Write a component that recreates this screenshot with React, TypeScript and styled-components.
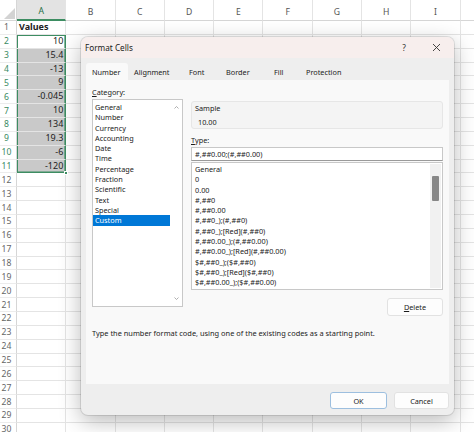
import React from "react";
import styled, { createGlobalStyle } from "styled-components";

const Global = createGlobalStyle`
  *, *::before, *::after { box-sizing: border-box; }
  html, body { margin: 0; padding: 0; background: #fff; }
  body { font-family: "Noto Sans", "Open Sans", sans-serif; }
`;

const Stage = styled.div`
  position: relative;
  width: 474px;
  height: 432px;
  overflow: hidden;
  background: #fff;
`;

/* ---------- Spreadsheet ---------- */

const Sheet = styled.div`
  display: grid;
  grid-template-columns: 17px repeat(10, 49.3px);
  grid-template-rows: 21px repeat(30, 13.87px);
  font-family: "Noto Sans", sans-serif;
  color: #222;
`;

const Corner = styled.div`
  position: relative;
  background: #fff;
  border-right: 1px solid #d6d6d6;
  border-bottom: 1px solid #d6d6d6;
`;

const CornerTriangle = styled.svg`
  position: absolute;
  right: 1px;
  bottom: 1px;
`;

const ColHeader = styled.div<{ $on?: boolean }>`
  display: flex;
  align-items: flex-end;
  justify-content: center;
  padding-bottom: 2px;
  font-size: 8.6px;
  color: ${(p) => (p.$on ? "#1f6f45" : "#555")};
  background: ${(p) => (p.$on ? "#e3e3e3" : "#fff")};
  border-right: 1px solid #e4e4e4;
  border-bottom: ${(p) => (p.$on ? "2px solid #3d8d62" : "1px solid #d6d6d6")};
`;

const RowHeader = styled.div<{ $on?: boolean }>`
  display: flex;
  align-items: center;
  justify-content: center;
  padding-right: 3px;
  font-size: 8.6px;
  color: ${(p) => (p.$on ? "#3a8a62" : "#666")};
  background: #fff;
  border-right: 1px solid #d6d6d6;
  border-bottom: 1px solid #ececec;
`;

const Cell = styled.div<{
  $range?: boolean;
  $active?: boolean;
  $top?: boolean;
  $bottom?: boolean;
  $bold?: boolean;
  $right?: boolean;
}>`
  position: relative;
  padding: 0 2px;
  font-size: 9px;
  line-height: 12.87px;
  white-space: nowrap;
  overflow: visible;
  text-align: ${(p) => (p.$right ? "right" : "left")};
  font-weight: ${(p) => (p.$bold ? 700 : 400)};
  background: ${(p) => (p.$range && !p.$active ? "#c9c9c9" : "#fff")};
  border-right: 1px solid ${(p) => (p.$range ? "#3d8d62" : "#e4e4e4")};
  border-bottom: 1px solid ${(p) => (p.$range && p.$bottom ? "#3d8d62" : "#e4e4e4")};
  box-shadow: ${(p) =>
    p.$range
      ? [
          "inset 1px 0 0 #3d8d62",
          "inset -0.6px 0 0 #3d8d62",
          p.$top ? "inset 0 1px 0 #3d8d62" : "",
          p.$bottom ? "inset 0 -0.6px 0 #3d8d62" : "",
        ]
          .filter(Boolean)
          .join(", ")
      : "none"};
`;

const FillHandle = styled.span`
  position: absolute;
  right: -3px;
  bottom: -3px;
  width: 4px;
  height: 4px;
  background: #3d8d62;
  border: 1px solid #fff;
  z-index: 2;
`;

/* ---------- Dialog ---------- */

const Dialog = styled.div`
  position: absolute;
  left: 81px;
  top: 37px;
  width: 373px;
  height: 378px;
  display: flex;
  flex-direction: column;
  background: #eeeeee;
  border-radius: 7px;
  overflow: hidden;
  box-shadow: 0 6px 22px rgba(0, 0, 0, 0.28), 0 0 0 1px rgba(0, 0, 0, 0.1);
  font-family: "Noto Sans", "Open Sans", sans-serif;
  color: #1b1b1b;
`;

const TitleBar = styled.div`
  height: 21px;
  flex: none;
  display: flex;
  align-items: center;
  padding: 0 2px 0 4px;
  background: #f7eeed;
  font-size: 8.2px;
`;

const Title = styled.span`
  flex: 1;
`;

const TitleButton = styled.div`
  width: 32px;
  height: 21px;
  display: flex;
  align-items: center;
  justify-content: center;
  font-size: 8.4px;
  color: #333;
`;

const TabStrip = styled.div`
  height: 22px;
  flex: none;
  display: flex;
  align-items: flex-end;
  padding-left: 5px;
`;

const Tab = styled.div<{ $w: number; $on?: boolean }>`
  width: ${(p) => p.$w}px;
  height: 17px;
  display: flex;
  align-items: center;
  padding-left: 6px;
  font-size: 7.3px;
  color: #1b1b1b;
  background: ${(p) => (p.$on ? "#f9f9f9" : "transparent")};
  border-radius: 3px 3px 0 0;
`;

const Panel = styled.div`
  height: 304px;
  flex: none;
  margin: 0 5px 0 5px;
  padding: 7px 5px 0 6px;
  background: #f9f9f9;
  font-size: 7.3px;
`;

const TopArea = styled.div`
  display: flex;
  gap: 8px;
`;

const LeftCol = styled.div`
  width: 91px;
  display: flex;
  flex-direction: column;
`;

const RightCol = styled.div`
  width: 252px;
  display: flex;
  flex-direction: column;
  padding-top: 14px;
`;

const Label = styled.div`
  height: 10px;
  line-height: 10px;
`;

const ListBox = styled.div<{ $h: number }>`
  height: ${(p) => p.$h}px;
  background: #fff;
  border: 1px solid #c8c8c8;
  display: flex;
  margin-top: 2px;
`;

const Items = styled.div<{ $pt: number; $pl: number }>`
  flex: 1;
  padding-top: ${(p) => p.$pt}px;
  overflow: hidden;
  & > div {
    padding-left: ${(p) => p.$pl}px;
  }
`;

const Item = styled.div<{ $sel?: boolean }>`
  height: 10.3px;
  line-height: 10.3px;
  white-space: nowrap;
  color: ${(p) => (p.$sel ? "#fff" : "#1b1b1b")};
  background: ${(p) => (p.$sel ? "#0078d7" : "transparent")};
`;

const ArrowTrack = styled.div`
  width: 12px;
  display: flex;
  flex-direction: column;
  justify-content: space-between;
  align-items: center;
  padding: 6px 0;
`;

const ScrollTrack = styled.div`
  width: 11px;
  margin: 1px 1px 1px 0;
  background: #f1f1f1;
  padding: 12px 1px 0 1.5px;
`;

const Thumb = styled.div`
  width: 7.5px;
  height: 25px;
  background: #878787;
  border-radius: 1px;
`;

const SampleGroup = styled.div`
  height: 28px;
  border: 1px solid #e6e6e6;
  border-radius: 3px;
  background: #f4f4f4;
  padding: 1px 0 0 3px;
`;

const SampleLabel = styled.div`
  line-height: 10px;
`;

const SampleValue = styled.div`
  line-height: 10px;
  margin-top: 4px;
  padding-left: 3px;
`;

const TypeLabel = styled(Label)`
  margin-top: 6px;
`;

const TypeInput = styled.div`
  height: 14px;
  margin-top: 2px;
  background: #fff;
  border: 1px solid #c8c8c8;
  border-bottom-color: #9a9a9a;
  padding-left: 3px;
  line-height: 12px;
`;

const TypeList = styled(ListBox)`
  margin-top: 1px;
`;

const Button = styled.div<{ $w: number; $default?: boolean }>`
  width: ${(p) => p.$w}px;
  height: 17px;
  display: flex;
  align-items: center;
  justify-content: center;
  font-size: 7.3px;
  color: #1b1b1b;
  background: #fdfdfd;
  border: 1px solid ${(p) => (p.$default ? "#9dbfdf" : "#e2e2e2")};
  border-radius: 3px;
`;

const DeleteButton = styled(Button)`
  align-self: flex-end;
  height: 18px;
  margin-top: 8px;
`;

const Description = styled.div`
  margin-top: 12px;
  line-height: 10px;
  font-size: 7.42px;
  white-space: nowrap;
`;

const Footer = styled.div`
  flex: 1;
  display: flex;
  justify-content: flex-end;
  gap: 7px;
  padding: 8px 5px 0 0;
`;

/* ---------- Data ---------- */

const COLS = ["A", "B", "C", "D", "E", "F", "G", "H", "I", ""];
const VALUES = ["10", "15.4", "-13", "9", "-0.045", "10", "134", "19.3", "-6", "-120"];

const CATEGORIES = [
  "General",
  "Number",
  "Currency",
  "Accounting",
  "Date",
  "Time",
  "Percentage",
  "Fraction",
  "Scientific",
  "Text",
  "Special",
  "Custom",
];

const TYPES = [
  "General",
  "0",
  "0.00",
  "#,##0",
  "#,##0.00",
  "#,##0_);(#,##0)",
  "#,##0_);[Red](#,##0)",
  "#,##0.00_);(#,##0.00)",
  "#,##0.00_);[Red](#,##0.00)",
  "$#,##0_);($#,##0)",
  "$#,##0_);[Red]($#,##0)",
  "$#,##0.00_);($#,##0.00)",
];

const TABS: [string, number][] = [
  ["Number", 42],
  ["Alignment", 55],
  ["Font", 37],
  ["Border", 48],
  ["Fill", 32],
  ["Protection", 48],
];

const Chevron = ({ up }: { up?: boolean }) => (
  <svg width="5" height="3" viewBox="0 0 5 3">
    <path
      d={up ? "M0.5 2.5 L2.5 0.5 L4.5 2.5" : "M0.5 0.5 L2.5 2.5 L4.5 0.5"}
      fill="none"
      stroke="#9a9a9a"
      strokeWidth="0.8"
    />
  </svg>
);

function SheetView() {
  const rows = [];
  for (let r = 1; r <= 30; r++) {
    const inRange = r >= 2 && r <= 11;
    rows.push(
      <RowHeader key={`rh${r}`} $on={inRange}>
        {r}
      </RowHeader>
    );
    COLS.forEach((c, ci) => {
      if (ci === 0) {
        const text = r === 1 ? "Values" : inRange ? VALUES[r - 2] : "";
        rows.push(
          <Cell
            key={`c${ci}-${r}`}
            $range={inRange}
            $active={r === 2}
            $top={r === 2}
            $bottom={r === 11}
            $bold={r === 1}
            $right={r !== 1}
          >
            {text}
            {r === 11 && <FillHandle />}
          </Cell>
        );
      } else {
        rows.push(<Cell key={`c${ci}-${r}`} />);
      }
    });
  }
  return (
    <Sheet>
      <Corner>
        <CornerTriangle width="11" height="11" viewBox="0 0 11 11">
          <polygon points="11,0 11,11 0,11" fill="#d3d3d3" />
        </CornerTriangle>
      </Corner>
      {COLS.map((c, i) => (
        <ColHeader key={`h${i}`} $on={i === 0}>
          {c}
        </ColHeader>
      ))}
      {rows}
    </Sheet>
  );
}

export default function App() {
  return (
    <Stage>
      <Global />
      <SheetView />
      <Dialog>
        <TitleBar>
          <Title>Format Cells</Title>
          <TitleButton>?</TitleButton>
          <TitleButton>
            <svg width="9" height="9" viewBox="0 0 9 9">
              <path d="M1 1 L8 8 M8 1 L1 8" stroke="#333" strokeWidth="0.9" />
            </svg>
          </TitleButton>
        </TitleBar>
        <TabStrip>
          {TABS.map(([t, w], i) => (
            <Tab key={t} $w={w} $on={i === 0}>
              {t}
            </Tab>
          ))}
        </TabStrip>
        <Panel>
          <TopArea>
            <LeftCol>
              <Label>
                <u>C</u>ategory:
              </Label>
              <ListBox $h={208}>
                <Items $pt={2} $pl={2}>
                  {CATEGORIES.map((c) => (
                    <Item key={c} $sel={c === "Custom"}>
                      {c}
                    </Item>
                  ))}
                </Items>
                <ArrowTrack>
                  <Chevron up />
                  <Chevron />
                </ArrowTrack>
              </ListBox>
            </LeftCol>
            <RightCol>
              <SampleGroup>
                <SampleLabel>Sample</SampleLabel>
                <SampleValue>10.00</SampleValue>
              </SampleGroup>
              <TypeLabel>
                <u>T</u>ype:
              </TypeLabel>
              <TypeInput>#,##0.00;(#,##0.00)</TypeInput>
              <TypeList $h={128}>
                <Items $pt={1} $pl={3}>
                  {TYPES.map((t) => (
                    <Item key={t}>{t}</Item>
                  ))}
                </Items>
                <ScrollTrack>
                  <Thumb />
                </ScrollTrack>
              </TypeList>
              <DeleteButton $w={56}>
                <span>
                  <u>D</u>elete
                </span>
              </DeleteButton>
            </RightCol>
          </TopArea>
          <Description>
            Type the number format code, using one of the existing codes as a starting point.
          </Description>
        </Panel>
        <Footer>
          <Button $w={57} $default>
            OK
          </Button>
          <Button $w={55}>Cancel</Button>
        </Footer>
      </Dialog>
    </Stage>
  );
}
